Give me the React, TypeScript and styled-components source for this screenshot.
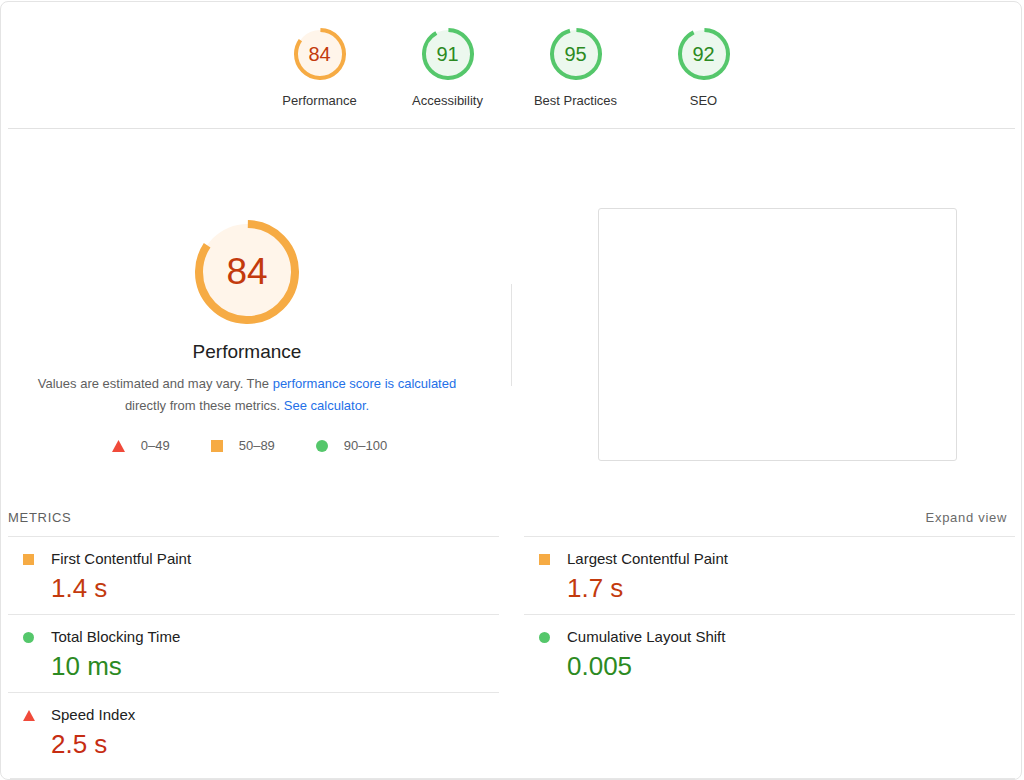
import React from 'react';
import styled, { createGlobalStyle } from 'styled-components';

type Rating = 'fail' | 'average' | 'pass';

const COLORS: Record<Rating, { shape: string; text: string; tint: string }> = {
  fail: { shape: '#f04a3a', text: '#c62d12', tint: '#fdeeee' },
  average: { shape: '#f6ab44', text: '#c33a0d', tint: '#fff5ea' },
  pass: { shape: '#55c76b', text: '#2c8a22', tint: '#ecf8ee' },
};

const GlobalStyle = createGlobalStyle`
  html, body {
    margin: 0;
    padding: 0;
    background: #ffffff;
  }
  body {
    font-family: "Liberation Sans", Arial, Helvetica, sans-serif;
    color: #212121;
  }
  * {
    box-sizing: border-box;
  }
`;

const SReport = styled.div`
  width: 1022px;
  margin-top: 1px;
  border: 1px solid #e4e4e4;
  border-radius: 8px;
  padding: 0 6px 0 7px;
  background: #fff;
`;

const SSummary = styled.div`
  display: flex;
  justify-content: center;
  padding: 26px 0 19px;
  border-bottom: 1px solid #e2e2e2;
`;

const SSummaryItem = styled.div`
  width: 128px;
  display: flex;
  flex-direction: column;
  align-items: center;
`;

const SSummaryLabel = styled.div`
  margin-top: 13px;
  font-size: 13px;
  line-height: 16px;
  color: #333;
  white-space: nowrap;
`;

const SGaugeWrap = styled.div<{ $size: number }>`
  position: relative;
  width: ${({ $size }) => $size}px;
  height: ${({ $size }) => $size}px;
`;

const SGaugeSvg = styled.svg`
  display: block;
`;

const SGaugeNumber = styled.div<{ $color: string; $fontSize: number }>`
  position: absolute;
  inset: 0;
  display: flex;
  align-items: center;
  justify-content: center;
  color: ${({ $color }) => $color};
  font-size: ${({ $fontSize }) => $fontSize}px;
`;

const SHero = styled.div`
  display: grid;
  grid-template-columns: 1fr 1px 1fr;
  column-gap: 25px;
  align-items: center;
  padding: 79px 0 49px;
`;

const SHeroScore = styled.div`
  align-self: start;
  display: flex;
  flex-direction: column;
  align-items: center;
  padding-top: 12px;
`;

const SHeroTitle = styled.div`
  margin-top: 16px;
  font-size: 19px;
  line-height: 24px;
  color: #212121;
`;

const SDescription = styled.div`
  margin-top: 9px;
  max-width: 430px;
  font-size: 13px;
  line-height: 22px;
  text-align: center;
  color: #5f5f5f;
`;

const SLink = styled.a`
  color: #2470e8;
  text-decoration: none;
`;

const SLegend = styled.div`
  margin-top: 21px;
  display: flex;
  gap: 41px;
  margin-left: 5px;
`;

const SLegendItem = styled.div`
  display: flex;
  align-items: center;
  gap: 16px;
  font-size: 13px;
  line-height: 16px;
  color: #616161;
`;

const SDivider = styled.div`
  width: 1px;
  height: 102px;
  background: #e3e3e3;
`;

const SScreenshot = styled.div`
  justify-self: center;
  margin-left: 3px;
  width: 359px;
  height: 253px;
  border: 1px solid #dedede;
  border-radius: 3px;
  background: #fff;
`;

const SMetricsHeader = styled.div`
  display: flex;
  justify-content: space-between;
  align-items: center;
  padding-bottom: 10px;
  font-size: 13px;
  line-height: 16px;
  letter-spacing: 0.7px;
  color: #5f5f5f;
`;

const SExpand = styled.span`
  margin-right: 8px;
  color: #6a6a6a;
`;

const SMetrics = styled.div`
  display: grid;
  grid-template-columns: 1fr 1fr;
  column-gap: 25px;
`;

const SMetric = styled.div`
  display: grid;
  grid-template-columns: 43px 1fr;
  padding: 12px 0 11px;
  border-top: 1px solid #e6e6e6;
`;

const SMetricIcon = styled.div`
  height: 20px;
  display: flex;
  align-items: center;
  padding-left: 15px;
`;

const SMetricTitle = styled.div`
  font-size: 15px;
  line-height: 20px;
  color: #212121;
`;

const SMetricValue = styled.div<{ $rating: Rating }>`
  margin-top: 4px;
  font-size: 26px;
  line-height: 30px;
  color: ${({ $rating }) => COLORS[$rating].text};
`;

const SFooterLine = styled.div`
  margin-top: 8px;
  border-top: 1px solid #e6e6e6;
  margin-left: 2px;
`;

const SquareShape = styled.div<{ $size: number }>`
  width: ${({ $size }) => $size}px;
  height: ${({ $size }) => $size}px;
  background: ${COLORS.average.shape};
`;

const CircleShape = styled.div<{ $size: number }>`
  width: ${({ $size }) => $size}px;
  height: ${({ $size }) => $size}px;
  border-radius: 50%;
  background: ${COLORS.pass.shape};
`;

function RatingIcon({ rating, size }: { rating: Rating; size: number }) {
  if (rating === 'average') return <SquareShape $size={size} />;
  if (rating === 'pass') return <CircleShape $size={size} />;
  return (
    <svg width={size + 1} height={size} viewBox="0 0 13 12">
      <polygon points="6.5,0 13,12 0,12" fill={COLORS.fail.shape} />
    </svg>
  );
}

const rate = (score: number): Rating => (score >= 90 ? 'pass' : score >= 50 ? 'average' : 'fail');

function Gauge({
  score, size, stroke, fontSize,
}: { score: number; size: number; stroke: number; fontSize: number }) {
  const rating = rate(score);
  const r = (size - stroke) / 2;
  const c = 2 * Math.PI * r;
  const mid = size / 2;

  return (
    <SGaugeWrap $size={size}>
      <SGaugeSvg width={size} height={size} viewBox={`0 0 ${size} ${size}`}>
        <circle cx={mid} cy={mid} r={r} fill={COLORS[rating].tint} />
        <circle
          cx={mid}
          cy={mid}
          r={r}
          fill="none"
          stroke={COLORS[rating].shape}
          strokeWidth={stroke}
          strokeDasharray={`${(score / 100) * c} ${c}`}
          transform={`rotate(-89 ${mid} ${mid})`}
        />
      </SGaugeSvg>
      <SGaugeNumber $color={COLORS[rating].text} $fontSize={fontSize}>
        {score}
      </SGaugeNumber>
    </SGaugeWrap>
  );
}

const categories = [
  { label: 'Performance', score: 84 },
  { label: 'Accessibility', score: 91 },
  { label: 'Best Practices', score: 95 },
  { label: 'SEO', score: 92 },
];

const metrics: { title: string; value: string; rating: Rating }[] = [
  { title: 'First Contentful Paint', value: '1.4 s', rating: 'average' },
  { title: 'Largest Contentful Paint', value: '1.7 s', rating: 'average' },
  { title: 'Total Blocking Time', value: '10 ms', rating: 'pass' },
  { title: 'Cumulative Layout Shift', value: '0.005', rating: 'pass' },
  { title: 'Speed Index', value: '2.5 s', rating: 'fail' },
];

export default function App() {
  return (
    <>
      <GlobalStyle />
      <SReport>
        <SSummary>
          {categories.map(({ label, score }) => (
            <SSummaryItem key={label}>
              <Gauge score={score} size={52} stroke={4} fontSize={20} />
              <SSummaryLabel>{label}</SSummaryLabel>
            </SSummaryItem>
          ))}
        </SSummary>

        <SHero>
          <SHeroScore>
            <Gauge score={84} size={104} stroke={8} fontSize={37} />
            <SHeroTitle>Performance</SHeroTitle>
            <SDescription>
              Values are estimated and may vary. The
              {' '}
              <SLink href="#score">performance score is calculated</SLink>
              {' '}
              directly from these metrics.
              {' '}
              <SLink href="#calc">See calculator.</SLink>
            </SDescription>
            <SLegend>
              <SLegendItem>
                <RatingIcon rating="fail" size={12} />
                0–49
              </SLegendItem>
              <SLegendItem>
                <RatingIcon rating="average" size={12} />
                50–89
              </SLegendItem>
              <SLegendItem>
                <RatingIcon rating="pass" size={12} />
                90–100
              </SLegendItem>
            </SLegend>
          </SHeroScore>
          <SDivider />
          <SScreenshot />
        </SHero>

        <SMetricsHeader>
          <span>METRICS</span>
          <SExpand>Expand view</SExpand>
        </SMetricsHeader>
        <SMetrics>
          {metrics.map(({ title, value, rating }) => (
            <SMetric key={title}>
              <SMetricIcon>
                <RatingIcon rating={rating} size={11} />
              </SMetricIcon>
              <div>
                <SMetricTitle>{title}</SMetricTitle>
                <SMetricValue $rating={rating}>{value}</SMetricValue>
              </div>
            </SMetric>
          ))}
        </SMetrics>
        <SFooterLine />
      </SReport>
    </>
  );
}
